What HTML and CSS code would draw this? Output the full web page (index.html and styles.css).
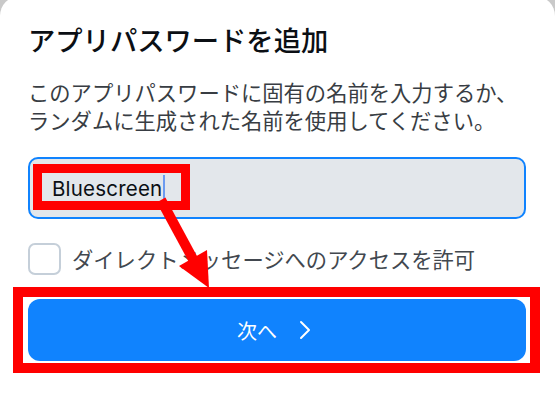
FILE: index.html
```html
<!DOCTYPE html>
<html lang="ja">
<head>
    <meta charset="UTF-8">
    <meta name="viewport" content="width=device-width, initial-scale=1.0">
    <title>アプリパスワードを追加</title>
    <link rel="stylesheet" href="styles.css">
</head>
<body>
    <div class="sheet">
        <h1 class="title">アプリパスワードを追加</h1>
        <p class="lead">このアプリパスワードに固有の名前を入力するか、<br>ランダムに生成された名前を使用してください。</p>

        <div class="field">
            <span class="field-value">Bluescreen</span><span class="caret"></span>
        </div>

        <label class="check-row">
            <span class="checkbox"></span>
            <span class="check-label">ダイレクトメッセージへのアクセスを許可</span>
        </label>

        <button class="next-btn">
            <span>次へ</span>
            <svg class="chevron" width="20" height="20" viewBox="0 0 20 20">
                <path d="M4 2 L12 10 L4 18" fill="none" stroke="#fff" stroke-width="2" stroke-linecap="round" stroke-linejoin="round"/>
            </svg>
        </button>
    </div>

    <!-- annotation marks drawn over the screenshot -->
    <svg class="marks" width="555" height="403" viewBox="0 0 555 403">
        <rect x="37.5" y="168.5" width="148" height="37" fill="none" stroke="#ff0000" stroke-width="9"/>
        <rect x="18" y="292" width="517" height="76" fill="none" stroke="#ff0000" stroke-width="10"/>
        <line x1="161" y1="200" x2="194" y2="261" stroke="#ff0000" stroke-width="10"/>
        <polygon points="209,288 207,250 179,266" fill="#ff0000"/>
    </svg>
</body>
</html>
```

FILE: styles.css
```css
body {
    margin: 0;
    background: #c9c9c9;
    font-family: "Noto Sans CJK JP", "Noto Sans", sans-serif;
    color: #0b0f14;
    overflow: hidden;
}
.sheet {
    margin-top: -4px;
    height: calc(100vh + 4px);
    box-sizing: border-box;
    padding: 26px 29px 0 28px;
    background: #ffffff;
    border-radius: 20px 20px 0 0;
}
.title {
    margin: 0;
    font-size: 27.3px;
    line-height: 34px;
    font-weight: 500;
    color: #0b0f14;
}
.lead {
    margin: 22px 0 0;
    font-size: 21.3px;
    line-height: 28px;
    color: #383d43;
}
.field {
    margin-top: 23px;
    height: 62px;
    box-sizing: border-box;
    display: flex;
    align-items: center;
    padding: 0 22px;
    background: #e3e7eb;
    border: 2px solid #1083fe;
    border-radius: 10px;
}
.field-value {
    font-family: Inter, "Noto Sans", sans-serif;
    font-size: 20.5px;
    letter-spacing: 0.2px;
    color: #0b0f14;
}
.caret {
    display: inline-block;
    width: 2px;
    height: 26px;
    margin-left: 1px;
    background: #6c9bf0;
}
.check-row {
    margin-top: 24px;
    display: flex;
    align-items: center;
    gap: 11px;
}
.checkbox {
    width: 33px;
    height: 32px;
    box-sizing: border-box;
    border: 2px solid #c5cfd9;
    border-radius: 7px;
    background: #ffffff;
}
.check-label {
    font-size: 21.3px;
    line-height: 28px;
    color: #42484f;
}
.next-btn {
    margin-top: 24px;
    width: 100%;
    height: 62px;
    display: flex;
    align-items: center;
    justify-content: center;
    gap: 20px;
    border: none;
    border-radius: 12px;
    background: #1083fe;
    color: #ffffff;
    font-family: "Noto Sans CJK JP", sans-serif;
    font-size: 20px;
    cursor: pointer;
}
.chevron {
    display: block;
}
.marks {
    position: absolute;
    top: 0;
    left: 0;
    pointer-events: none;
}
```
